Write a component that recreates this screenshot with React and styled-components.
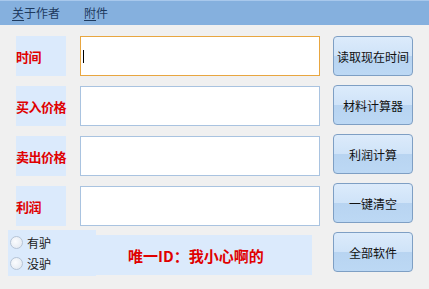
import React from "react";
import styled, { createGlobalStyle } from "styled-components";

const GlobalStyle = createGlobalStyle`
  html, body {
    margin: 0;
    padding: 0;
    background: #f0f0f0;
    font-family: "Noto Sans CJK SC", "Noto Sans", sans-serif;
    font-size: 12px;
  }
`;

const rows = [
  { label: "时间", focused: true },
  { label: "买入价格" },
  { label: "卖出价格" },
  { label: "利润" },
];

const buttons = ["读取现在时间", "材料计算器", "利润计算", "一键清空", "全部软件"];

const App = () => {
  return (
    <>
      <GlobalStyle />
      <Window>
        <MenuBar>
          <MenuItem>
            <u>关</u>于作者
          </MenuItem>
          <MenuItem>
            <u>附</u>件
          </MenuItem>
        </MenuBar>
        <Body>
          <LeftCol>
            {rows.map((r) => (
              <FieldRow key={r.label}>
                <Label>{r.label}</Label>
                <Input focused={r.focused}>{r.focused && <Caret />}</Input>
              </FieldRow>
            ))}
            <BottomRow>
              <RadioPanel>
                <RadioItem>
                  <Radio />
                  有驴
                </RadioItem>
                <RadioItem>
                  <Radio />
                  没驴
                </RadioItem>
              </RadioPanel>
              <IdPanel>唯一ID：我小心啊的</IdPanel>
            </BottomRow>
          </LeftCol>
          <RightCol>
            {buttons.map((b) => (
              <Button key={b}>{b}</Button>
            ))}
          </RightCol>
        </Body>
      </Window>
    </>
  );
};

export default App;

const Window = styled.div`
  width: 429px;
  height: 289px;
  overflow: hidden;
`;

const MenuBar = styled.div`
  height: 25px;
  background: #85b0de;
  border-top: 1px solid #a8c8ec;
  box-sizing: border-box;
  display: flex;
  align-items: center;
  padding-left: 12px;
  gap: 24px;
`;

const MenuItem = styled.span`
  color: #1e3a5e;
  font-size: 12px;
  line-height: 1;

  u {
    text-underline-offset: 2px;
  }
`;

const Body = styled.div`
  display: flex;
  padding-top: 11px;
`;

const LeftCol = styled.div`
  display: flex;
  flex-direction: column;
  gap: 10px;
  width: 333px;
`;

const FieldRow = styled.div`
  display: flex;
  gap: 14px;
  padding-left: 16px;
  height: 40px;
`;

const Label = styled.div`
  width: 50px;
  background: #dbeafc;
  color: #e00000;
  font-weight: bold;
  font-size: 13px;
  letter-spacing: -0.5px;
  white-space: nowrap;
  display: flex;
  align-items: center;
`;

const Input = styled.div`
  width: 240px;
  background: #fff;
  border: 1px solid ${(p) => (p.focused ? "#e8a640" : "#a9c3e0")};
  box-sizing: border-box;
  display: flex;
  align-items: center;
  padding-left: 2px;
`;

const Caret = styled.span`
  width: 1px;
  height: 13px;
  background: #000;
`;

const BottomRow = styled.div`
  display: flex;
  align-items: flex-start;
  margin-left: 8px;
  margin-top: -6px;
`;

const RadioPanel = styled.div`
  width: 88px;
  height: 46px;
  background: #dbeafc;
  display: flex;
  flex-direction: column;
  justify-content: center;
  gap: 5px;
`;

const RadioItem = styled.label`
  display: flex;
  align-items: center;
  gap: 4px;
  padding-left: 2px;
  color: #1a1a1a;
  font-size: 12px;
  line-height: 16px;
`;

const Radio = styled.span`
  width: 11px;
  height: 11px;
  border-radius: 50%;
  border: 1px solid #b6c4d6;
  background: radial-gradient(circle at 40% 40%, #fbfcfe, #dfe6ef);
`;

const IdPanel = styled.div`
  margin-top: 5px;
  width: 216px;
  height: 40px;
  background: #dbeafc;
  color: #e00000;
  font-weight: bold;
  font-size: 15px;
  display: flex;
  align-items: center;
  padding-left: 32px;
  box-sizing: border-box;
`;

const RightCol = styled.div`
  display: flex;
  flex-direction: column;
  gap: 9px;
`;

const Button = styled.div`
  width: 80px;
  height: 40px;
  box-sizing: border-box;
  border: 1px solid #7e9fc4;
  border-radius: 4px;
  background: linear-gradient(#dcebfb 0%, #cfe3f8 50%, #b8d4f1 51%, #bcd8f4 100%);
  color: #111;
  font-size: 12px;
  display: flex;
  align-items: center;
  justify-content: center;
`;
